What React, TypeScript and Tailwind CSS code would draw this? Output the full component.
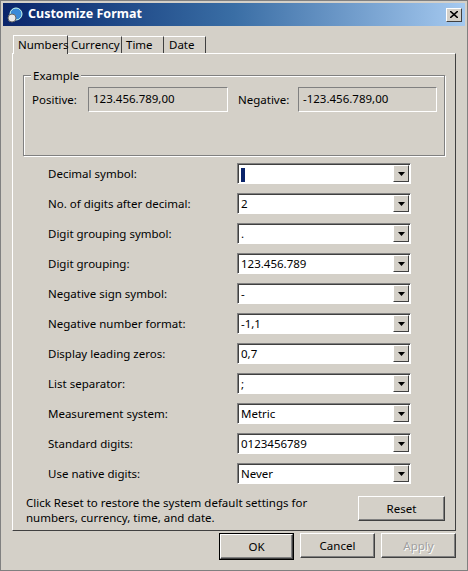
import React from "react";

const rows: [string, string][] = [
  ["Decimal symbol:", ""],
  ["No. of digits after decimal:", "2"],
  ["Digit grouping symbol:", "."],
  ["Digit grouping:", "123.456.789"],
  ["Negative sign symbol:", "-"],
  ["Negative number format:", "-1,1"],
  ["Display leading zeros:", "0,7"],
  ["List separator:", ";"],
  ["Measurement system:", "Metric"],
  ["Standard digits:", "0123456789"],
  ["Use native digits:", "Never"],
];

function Arrow() {
  return (
    <div className="w-[16px] h-[17px] bg-[#d4d0c8] border border-t-white border-l-white border-r-[#404040] border-b-[#404040] flex items-center justify-center">
      <svg width="7" height="4" viewBox="0 0 7 4"><path d="M0 0h7L3.5 4z" fill="#000" /></svg>
    </div>
  );
}

function Btn({ label, cls = "", disabled = false }: { label: string; cls?: string; disabled?: boolean }) {
  return (
    <div className={`h-[25px] flex items-center justify-center bg-[#d4d0c8] border border-t-white border-l-white border-r-[#404040] border-b-[#404040] shadow-[inset_-1px_-1px_0_#808080] ${cls}`}>
      <span className={disabled ? "text-[#a0a0a0] [text-shadow:1px_1px_0_#fff]" : ""}>{label}</span>
    </div>
  );
}

export default function App() {
  return (
    <div className="w-[468px] h-[571px] bg-[#d4d0c8] border border-[#808080] text-black flex flex-col" style={{ fontFamily: "'Noto Sans', 'Open Sans', sans-serif", fontSize: 11.5 }}>
      <div className="h-[23px] mx-[2px] mt-[2px] bg-gradient-to-r from-[#0a246a] via-[#3a6ea5] to-[#a6caf0] flex items-center pl-[4px] pr-[3px]">
        <svg width="16" height="16" viewBox="0 0 16 16">
          <circle cx="9" cy="7" r="6" fill="#3a8ad8" />
          <circle cx="9" cy="7" r="6" fill="none" stroke="#cfe" strokeWidth="1" />
          <circle cx="5" cy="11" r="4" fill="#e8e8e8" stroke="#666" />
        </svg>
        <span className="ml-[5px] text-white font-bold text-[12.5px]">Customize Format</span>
        <div className="ml-auto w-[16px] h-[14px] bg-[#d4d0c8] border border-t-white border-l-white border-r-[#404040] border-b-[#404040] flex items-center justify-center">
          <svg width="8" height="7" viewBox="0 0 8 7"><path d="M0 0l8 7M8 0L0 7" stroke="#000" strokeWidth="1.6" /></svg>
        </div>
      </div>
      <div className="px-[11px] pt-[8px] flex flex-col flex-1">
        <div className="flex items-end h-[19px] pl-[1px]">
          <div className="h-[19px] w-[55px] pl-[4px] border border-b-0 border-t-white border-l-white border-r-[#404040] bg-[#d4d0c8] relative top-[1px] z-10 flex items-center">Numbers</div>
          <div className="h-[17px] w-[54px] pl-[3px] border border-b-0 border-l-0 border-t-white border-r-[#404040] flex items-center">Currency</div>
          <div className="h-[17px] w-[42px] pl-[4px] border border-b-0 border-l-0 border-t-white border-r-[#404040] flex items-center">Time</div>
          <div className="h-[17px] w-[42px] pl-[5px] border border-b-0 border-l-0 border-t-white border-r-[#404040] flex items-center">Date</div>
        </div>
        <div className="h-[478px] border border-t-white border-l-white border-r-[#404040] border-b-[#404040] px-[10px] pt-[21px]">
          <div className="relative h-[81px] border border-[#808080] shadow-[1px_1px_0_#fff,inset_1px_1px_0_#fff]">
            <span className="absolute -top-[9px] left-[7px] px-[2px] bg-[#d4d0c8]">Example</span>
            <div className="flex items-center pt-[11px] pl-[8px]">
              <span className="w-[56px]">Positive:</span>
              <div className="w-[140px] h-[25px] border border-t-[#808080] border-l-[#808080] border-r-white border-b-white pl-[4px] pt-[2px]">123.456.789,00</div>
              <span className="ml-[10px] w-[60px]">Negative:</span>
              <div className="w-[139px] h-[25px] border border-t-[#808080] border-l-[#808080] border-r-white border-b-white pl-[4px] pt-[2px]">-123.456.789,00</div>
            </div>
          </div>
          <div className="flex flex-col gap-[9px] mt-[7px] pl-[25px]">
            {rows.map(([l, v], i) => (
              <div key={i} className="flex items-center h-[21px]">
                <span className="w-[189px]">{l}</span>
                <div className="w-[174px] h-[21px] bg-white border border-t-[#808080] border-l-[#808080] border-r-white border-b-white shadow-[inset_1px_1px_0_#404040] flex items-center justify-between pl-[3px] pr-[1px]">
                  <span>{i === 0 ? <span className="inline-block w-[4px] h-[14px] bg-[#0a246a] align-middle" /> : v}</span>
                  <Arrow />
                </div>
              </div>
            ))}
          </div>
          <div className="flex items-start mt-[11px] pl-[3px]">
            <p className="w-[290px] leading-[15px]">Click Reset to restore the system default settings for numbers, currency, time, and date.</p>
            <Btn label="Reset" cls="ml-auto mt-[1px] w-[87px]" />
          </div>
        </div>
        <div className="flex justify-end gap-[6px] mt-[2px]">
          <div className="border border-black"><Btn label="OK" cls="w-[73px] h-[23px]" /></div>
          <Btn label="Cancel" cls="w-[75px]" />
          <Btn label="Apply" cls="w-[75px]" disabled />
        </div>
      </div>
    </div>
  );
}
